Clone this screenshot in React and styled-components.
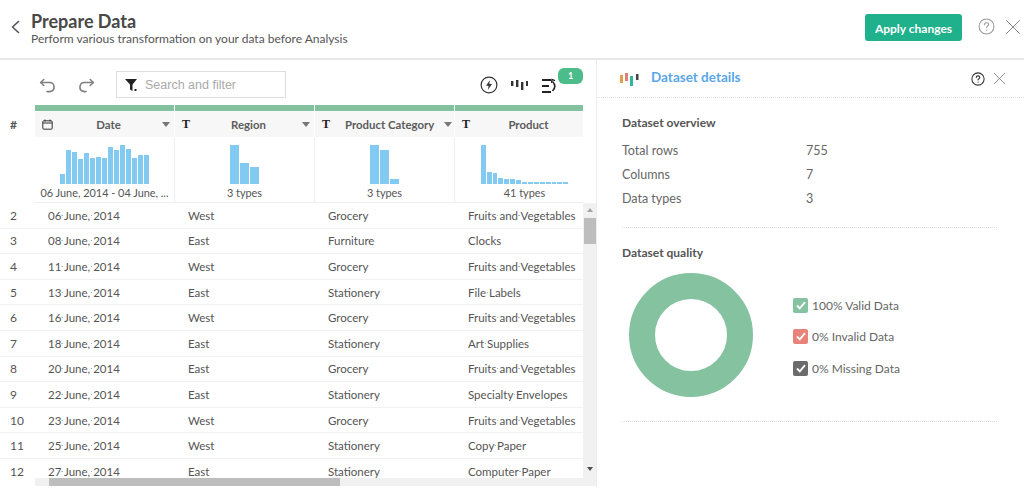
import React from "react";
import styled, { createGlobalStyle } from "styled-components";

const Global = createGlobalStyle`
  html, body { margin: 0; padding: 0; background: #fff; }
  body { font-family: Lato, "Noto Sans", sans-serif; color: #555; }
  * { box-sizing: border-box; }
`;

const Page = styled.div`
  width: 1024px;
  height: 493px;
  overflow: hidden;
  background: #fff;
  display: flex;
  flex-direction: column;
`;

const TopBar = styled.header`
  height: 60px;
  flex: none;
  display: flex;
  align-items: flex-start;
  border-bottom: 2px solid #e8e8e8;
`;
const Back = styled.div`
  width: 31px;
  padding: 20px 0 0 9px;
  flex: none;
  line-height: 0;
`;
const Titles = styled.div`
  flex: 1;
  padding-top: 11px;
`;
const Title = styled.h1`
  margin: 0;
  font-size: 18px;
  line-height: 20px;
  font-weight: 700;
  color: #484848;
`;
const Subtitle = styled.p`
  margin: 0;
  font-size: 12px;
  line-height: 15px;
  color: #555;
`;
const ApplyButton = styled.button`
  margin-top: 14px;
  width: 97px;
  height: 27px;
  border: 0;
  border-radius: 3px;
  background: #1fb08c;
  color: #fff;
  font: 700 12px Lato, sans-serif;
  padding: 1px 0 0;
`;
const TopIcons = styled.div`
  display: flex;
  align-items: center;
  gap: 10px;
  margin: 18px 3px 0 16px;
  line-height: 0;
`;

const Main = styled.main`
  flex: 1;
  display: flex;
  min-height: 0;
`;
const DataPane = styled.section`
  width: 597px;
  height: 427px;
  flex: none;
  border-right: 1px solid #ececec;
  display: flex;
  flex-direction: column;
`;
const Toolbar = styled.div`
  height: 45px;
  flex: none;
  display: flex;
  align-items: flex-start;
  position: relative;
`;
const ToolIcon = styled.div`
  line-height: 0;
  margin: ${(p) => p.$m};
`;
const Search = styled.div`
  width: 170px;
  height: 27px;
  margin: 11px 0 0 20px;
  border: 1px solid #dedede;
  display: flex;
  align-items: center;
  gap: 7px;
  padding-left: 8px;
  font: 12.5px "Liberation Sans", Arial, sans-serif;
  color: #aaa;
`;
const Badge = styled.span`
  position: absolute;
  left: 558px;
  top: 8px;
  width: 25px;
  height: 16px;
  border-radius: 6px;
  background: #4cbd8a;
  color: #fff;
  font-size: 9px;
  font-weight: 700;
  line-height: 16px;
  text-align: center;
`;

const HeadGrid = styled.div`
  width: 583px;
  display: grid;
  grid-template-columns: 35px repeat(4, 140px);
  overflow: hidden;
  flex: none;
`;
const HashCell = styled.div`
  grid-row: 1 / span 3;
  padding: 12px 0 0 10px;
  font-size: 12px;
  font-weight: 700;
  color: #555;
`;
const GreenBar = styled.div`
  height: 6px;
  background: #84c29f;
  border-right: 1px solid #fff;
`;
const ColHead = styled.div`
  height: 26px;
  background: #f7f7f7;
  border-right: 1px solid #fff;
  display: grid;
  grid-template-columns: 30px 1fr 22px;
  align-items: center;
  font-size: 11.4px;
  font-weight: 700;
  color: #5c5c5c;
  white-space: nowrap;
`;
const ColType = styled.span`
  padding-left: 7px;
  display: flex;
  align-items: center;
  font: 700 12px "Liberation Serif", serif;
  color: #222;
`;
const ColLabel = styled.span`
  text-align: center;
`;
const Caret = styled.span`
  width: 0;
  height: 0;
  margin-left: 10px;
  border-left: 4px solid transparent;
  border-right: 4px solid transparent;
  border-top: 5px solid #777;
`;
const Summary = styled.div`
  height: 66px;
  border-right: 1px solid #f0f0f0;
  border-bottom: 1px solid #eee;
  display: flex;
  flex-direction: column;
  align-items: center;
`;
const Bars = styled.div`
  height: 47px;
  display: flex;
  align-items: flex-end;
  gap: ${(p) => p.$gap}px;
  flex: none;
`;
const Bar = styled.span`
  display: block;
  width: ${(p) => p.$w}px;
  background: #83caf3;
`;
const SummaryText = styled.span`
  font-size: 10.9px;
  line-height: 18px;
  color: #555;
  white-space: nowrap;
`;

const ScrollArea = styled.div`
  height: 275px;
  flex: none;
  display: flex;
`;
const Rows = styled.div`
  width: 583px;
  flex: none;
  overflow: hidden;
`;
const Row = styled.div`
  height: 25.6px;
  display: grid;
  grid-template-columns: 35px 140px 140px 140px 128px;
  align-items: center;
  border-bottom: 1px solid #f1f1f1;
  font-size: 11.5px;
  color: #555;
  white-space: nowrap;
`;
const RowNum = styled.span`
  padding-left: 10px;
  font-size: 12px;
`;
const Cell = styled.span`
  padding-left: 13px;
`;
const Sp = styled.span`
  white-space: pre;
  background: radial-gradient(circle, #8fb8c4 0.7px, transparent 1px) center no-repeat;
`;
const VScroll = styled.div`
  width: 13px;
  flex: none;
  background: #f1f1f1;
  display: flex;
  flex-direction: column;
  align-items: center;
`;
const ArrowUp = styled.span`
  margin-top: 5px;
  width: 0;
  height: 0;
  border-left: 3.5px solid transparent;
  border-right: 3.5px solid transparent;
  border-bottom: 4px solid #a3a3a3;
`;
const VThumb = styled.span`
  margin-top: 6px;
  width: 12px;
  height: 26px;
  background: #bdbdbd;
`;
const ArrowDown = styled.span`
  margin-top: auto;
  margin-bottom: 7px;
  width: 0;
  height: 0;
  border-left: 3.5px solid transparent;
  border-right: 3.5px solid transparent;
  border-top: 4px solid #505050;
`;
const HScroll = styled.div`
  height: 8px;
  margin-left: 35px;
  flex: none;
  background: #f1f1f1;
  display: flex;
  align-items: stretch;
  padding-left: 14px;
`;
const HThumb = styled.span`
  width: 291px;
  background: #bdbdbd;
`;

const Details = styled.aside`
  flex: 1;
  min-width: 0;
`;
const DetailsHead = styled.div`
  height: 38px;
  border-bottom: 1px dotted #e2e2e2;
  display: flex;
  align-items: center;
  padding: 0 18px 0 23px;
`;
const DetailsTitle = styled.h2`
  flex: 1;
  margin: 0 0 4px 11px;
  font-size: 13.5px;
  font-weight: 700;
  color: #5aa6e8;
`;
const HeadTools = styled.div`
  display: flex;
  align-items: center;
  gap: 8px;
  line-height: 0;
`;
const Section = styled.section`
  margin: 0 27px 0 25px;
  border-bottom: 1px dotted #dcdcdc;
  padding-top: ${(p) => p.$top}px;
  height: ${(p) => p.$h}px;
`;
const SectionTitle = styled.h3`
  margin: 0;
  font-size: 12px;
  line-height: 16px;
  font-weight: 700;
  color: #555;
`;
const Stats = styled.div`
  margin-top: 7px;
  display: grid;
  grid-template-columns: 184px 1fr;
  grid-auto-rows: 24px;
  align-items: center;
  font-size: 12.5px;
  color: #666;
`;
const Quality = styled.div`
  display: flex;
  align-items: flex-start;
  margin-top: 12px;
`;
const Donut = styled.div`
  width: 124px;
  height: 124px;
  margin-left: 7px;
  border-radius: 50%;
  border: 26px solid #85c2a0;
  flex: none;
`;
const Legend = styled.ul`
  list-style: none;
  margin: 24px 0 0 40px;
  padding: 0;
  display: flex;
  flex-direction: column;
  gap: 15.6px;
`;
const LegendItem = styled.li`
  display: flex;
  align-items: center;
  gap: 4px;
  height: 16px;
  font-size: 12px;
  color: #666;
`;
const Check = styled.span`
  width: 15px;
  height: 15px;
  border-radius: 2px;
  background: ${(p) => p.$color};
  display: flex;
  align-items: center;
  justify-content: center;
  flex: none;
`;

const Stroke = ({ size, color = "#555", w = 1.5, children, box = 24 }) => (
  <svg width={size} height={size} viewBox={`0 0 ${box} ${box}`} fill="none" stroke={color} strokeWidth={w} strokeLinecap="round" strokeLinejoin="round">
    {children}
  </svg>
);
const Help = ({ size, color, w = 1 }) => (
  <Stroke size={size} box={16} color={color} w={w}>
    <circle cx="8" cy="8" r="7" />
    <path d="M6 6.3c0-1.2.9-1.9 2-1.9s2 .7 2 1.8c0 1.5-2 1.5-2 3" />
    <path d="M8 11.4v.2" />
  </Stroke>
);
const Close = ({ size, color }) => (
  <Stroke size={size} box={16} color={color} w={1}>
    <path d="M1.5 1.5l13 13M14.5 1.5l-13 13" />
  </Stroke>
);

const Sheet = ({ text }) =>
  text.split(" ").map((w, i) => (
    <React.Fragment key={i}>
      {i > 0 && <Sp> </Sp>}
      {w}
    </React.Fragment>
  ));

const columns = [
  { name: "Date", type: "cal", caret: true, w: 5, gap: 0.95, text: "06 June, 2014 - 04 June, ...", bars: [10, 34, 32, 25, 31, 26, 27, 26, 37, 34, 39, 35, 26, 29, 29] },
  { name: "Region", type: "T", caret: true, w: 9, gap: 1.3, text: "3 types", bars: [39, 21, 17] },
  { name: "Product Category", type: "T", caret: true, w: 9, gap: 1.3, text: "3 types", bars: [39, 34, 5] },
  { name: "Product", type: "T", caret: false, w: 4.9, gap: 1, text: "41 types", bars: [39, 12, 11, 6, 5, 5, 4, 2, 2, 2, 2, 2, 2, 2, 2] },
];

const rows = [
  [2, "06 June, 2014", "West", "Grocery", "Fruits and Vegetables"],
  [3, "08 June, 2014", "East", "Furniture", "Clocks"],
  [4, "11 June, 2014", "West", "Grocery", "Fruits and Vegetables"],
  [5, "13 June, 2014", "East", "Stationery", "File Labels"],
  [6, "16 June, 2014", "West", "Grocery", "Fruits and Vegetables"],
  [7, "18 June, 2014", "East", "Stationery", "Art Supplies"],
  [8, "20 June, 2014", "East", "Grocery", "Fruits and Vegetables"],
  [9, "22 June, 2014", "East", "Stationery", "Specialty Envelopes"],
  [10, "23 June, 2014", "West", "Grocery", "Fruits and Vegetables"],
  [11, "25 June, 2014", "West", "Stationery", "Copy Paper"],
  [12, "27 June, 2014", "East", "Stationery", "Computer Paper"],
];

const CalendarIcon = () => (
  <svg width="11" height="11" viewBox="0 0 11 11" fill="none" stroke="#333" strokeWidth="1">
    <rect x="0.8" y="1.8" width="9.4" height="8.4" rx="1" />
    <path d="M0.8 4h9.4M3 .5v2M8 .5v2" />
  </svg>
);

export default function App() {
  return (
    <Page>
      <Global />
      <TopBar>
        <Back>
          <Stroke size={14} box={14} color="#555" w={1.6}>
            <path d="M9.5 1.5L3.5 7l6 5.5" />
          </Stroke>
        </Back>
        <Titles>
          <Title>Prepare Data</Title>
          <Subtitle>Perform various transformation on your data before Analysis</Subtitle>
        </Titles>
        <ApplyButton>Apply changes</ApplyButton>
        <TopIcons>
          <Help size={17} color="#999" />
          <Close size={16} color="#888" />
        </TopIcons>
      </TopBar>
      <Main>
        <DataPane>
          <Toolbar>
            <ToolIcon $m="18px 0 0 38px">
              <Stroke size={18} box={18} color="#808080" w={1.6}>
                <path d="M3 4.5h8.5a4.5 4.5 0 0 1 1 8.9c-1 .3-2.5.3-3.5.1" />
                <path d="M5.8 1.5L2.6 4.5l3.2 3" />
              </Stroke>
            </ToolIcon>
            <ToolIcon $m="18px 0 0 22px">
              <Stroke size={18} box={18} color="#808080" w={1.6}>
                <path d="M15 4.5H6.5a4.5 4.5 0 0 0-1 8.9c1 .3 1.6.3 2.5.1" />
                <path d="M12.2 1.5l3.2 3-3.2 3" />
              </Stroke>
            </ToolIcon>
            <Search>
              <svg width="13" height="14" viewBox="0 0 13 14" fill="#222">
                <path d="M0 1h12L7.5 6.5V13L5 11.5v-5z" />
                <rect x="9.5" y="11" width="2" height="2" />
              </svg>
              <span>Search and filter</span>
            </Search>
            <ToolIcon $m="16px 0 0 194px">
              <svg width="18" height="18" viewBox="0 0 18 18">
                <circle cx="9" cy="9" r="7.9" fill="none" stroke="#333" strokeWidth="1.2" />
                <path d="M9.8 4.2L6 9.8h2.6L8 13.8l4-5.8H9.3z" fill="#333" />
              </svg>
            </ToolIcon>
            <ToolIcon $m="19px 0 0 13px">
              <svg width="17" height="12" viewBox="0 0 17 12" fill="#333">
                <rect x="0" y="2" width="2.4" height="5" />
                <rect x="5" y="1" width="2.4" height="7" />
                <rect x="10" y="3" width="2.4" height="8" />
                <rect x="15" y="2" width="2" height="5" />
              </svg>
            </ToolIcon>
            <ToolIcon $m="18px 0 0 13px">
              <svg width="16" height="16" viewBox="0 0 16 16" fill="none" stroke="#222">
                <path d="M1 2h9M1 8h7M1 14h9" strokeWidth="2" />
                <path d="M11.5 3.5c3 3 3 6.500 0 9.500" strokeWidth="1.5" />
                <path d="M10.500 4.800l.5-3.300 3 1.200" strokeWidth="1.3" />
              </svg>
            </ToolIcon>
            <Badge>1</Badge>
          </Toolbar>
          <HeadGrid>
            <HashCell>#</HashCell>
            {columns.map((c) => (
              <GreenBar key={c.name} />
            ))}
            {columns.map((c) => (
              <ColHead key={c.name}>
                <ColType>{c.type === "cal" ? <CalendarIcon /> : "T"}</ColType>
                <ColLabel>{c.name}</ColLabel>
                {c.caret ? <Caret /> : <span />}
              </ColHead>
            ))}
            {columns.map((c) => (
              <Summary key={c.name}>
                <Bars $gap={c.gap}>
                  {c.bars.map((h, i) => (
                    <Bar key={i} $w={c.w} style={{ height: h }} />
                  ))}
                </Bars>
                <SummaryText>{c.text}</SummaryText>
              </Summary>
            ))}
          </HeadGrid>
          <ScrollArea>
            <Rows>
              {rows.map((r) => (
                <Row key={r[0]}>
                  <RowNum>{r[0]}</RowNum>
                  <Cell>
                    <Sheet text={r[1]} />
                  </Cell>
                  <Cell>{r[2]}</Cell>
                  <Cell>{r[3]}</Cell>
                  <Cell>
                    <Sheet text={r[4]} />
                  </Cell>
                </Row>
              ))}
            </Rows>
            <VScroll>
              <ArrowUp />
              <VThumb />
              <ArrowDown />
            </VScroll>
          </ScrollArea>
          <HScroll>
            <HThumb />
          </HScroll>
        </DataPane>
        <Details>
          <DetailsHead>
            <svg width="20" height="14" viewBox="0 0 20 14">
              <rect x="0" y="3" width="3" height="8" fill="#e0a050" />
              <rect x="5" y="1" width="3" height="8" fill="#e08070" />
              <rect x="10" y="4" width="3" height="10" fill="#35b39b" />
              <rect x="16" y="2" width="2.5" height="6" fill="#444" />
            </svg>
            <DetailsTitle>Dataset details</DetailsTitle>
            <HeadTools>
              <Help size={14} color="#333" w={1.2} />
              <Close size={13} color="#777" />
            </HeadTools>
          </DetailsHead>
          <Section $top={17} $h={130}>
            <SectionTitle>Dataset overview</SectionTitle>
            <Stats>
              <span>Total rows</span>
              <span>755</span>
              <span>Columns</span>
              <span>7</span>
              <span>Data types</span>
              <span>3</span>
            </Stats>
          </Section>
          <Section $top={17} $h={194}>
            <SectionTitle>Dataset quality</SectionTitle>
            <Quality>
              <Donut />
              <Legend>
                {[
                  ["#85c2a0", "100% Valid Data"],
                  ["#e8837a", "0% Invalid Data"],
                  ["#6b6b6b", "0% Missing Data"],
                ].map(([color, text]) => (
                  <LegendItem key={text}>
                    <Check $color={color}>
                      <svg width="10" height="9" viewBox="0 0 10 9" fill="none" stroke="#fff" strokeWidth="1.8">
                        <path d="M1 4.5l2.8 2.8L9 1.2" />
                      </svg>
                    </Check>
                    {text}
                  </LegendItem>
                ))}
              </Legend>
            </Quality>
          </Section>
        </Details>
      </Main>
    </Page>
  );
}
